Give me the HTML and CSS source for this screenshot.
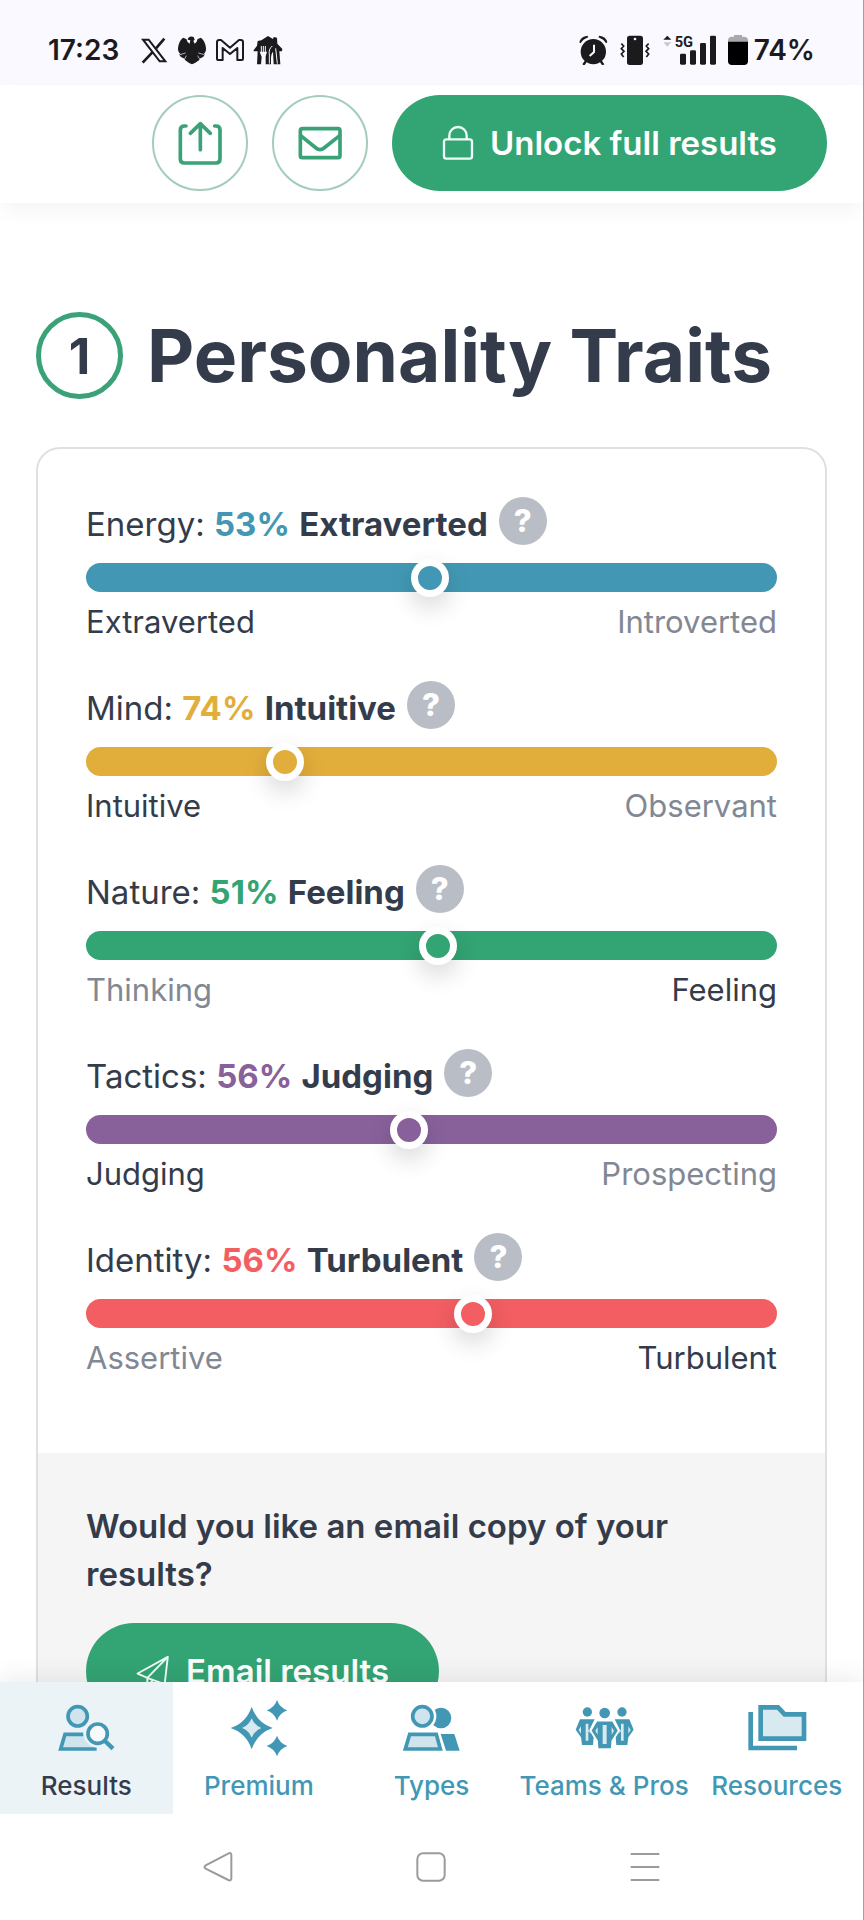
FILE: index.html
```html
<!DOCTYPE html>
<html lang="en">
<head>
    <meta charset="UTF-8">
    <meta name="viewport" content="width=device-width, initial-scale=1.0">
    <title>Personality Traits</title>
    <link rel="stylesheet" href="styles.css">
</head>
<body>
    <div class="status-bar">
        <div class="status-left">
            <span class="clock">17:23</span>
            <svg class="status-icon" viewBox="0 0 90 90" fill="none" stroke="#1b1b1e">
                <path d="M12 14H29L79 79H62Z" stroke-width="6"/>
                <path d="M76 11L51 40M40 52L11 83" stroke-width="8"/>
            </svg>
            <svg class="status-icon" viewBox="0 0 90 90" fill="#1b1b1e">
                <path d="M34 8Q42 2 50 6L53 14L49 18L53 26Q60 22 62 12L72 8Q86 20 87 40Q88 52 77 60L84 58Q80 68 70 70L66 76Q56 84 45 88Q34 84 25 76L20 70Q10 68 6 58L14 60Q2 52 3 40Q4 20 18 8L28 12Q30 22 38 26L40 16L32 14Z"/>
                <path d="M28 62L22 74M62 62L69 74M12 58L26 54M78 58L64 54" stroke="#faf9ff" stroke-width="2"/>
            </svg>
            <svg class="status-icon" viewBox="0 0 90 90" fill="none" stroke="#1b1b1e" stroke-width="6" stroke-linejoin="round">
                <path d="M6 22Q6 15 13 15H18L45 38L72 15H77Q84 15 84 22V72Q84 75 81 75H67V39L45 57L23 39V75H9Q6 75 6 72Z"/>
            </svg>
            <svg class="status-icon" viewBox="0 0 90 90" fill="#1b1b1e">
                <path d="M2 46L12 32L14 18L25 16L45 3L60 12L62 6L72 8L73 26L88 42L87 49H79L82 88H62L60 50Q54 56 54 72V88H38V64L42 50H20L26 66L24 88H12L14 49H2Z"/>
                <path d="M25 33V52Q25 58 31 59V86M31 33V52M37 33V52Q37 58 31 59" fill="none" stroke="#faf9ff" stroke-width="3"/>
                <path d="M58 33Q46 42 49 60V86M68 40L73 86" fill="none" stroke="#faf9ff" stroke-width="3"/>
            </svg>
        </div>
        <div class="status-right">
            <svg class="status-icon" viewBox="0 0 90 90" fill="#1b1b1e">
                <circle cx="46" cy="50" r="38"/>
                <path d="M4 22Q8 4 28 2L31 7Q14 13 8 25Z"/>
                <path d="M88 22Q84 4 64 2L61 7Q78 13 84 25Z"/>
                <path d="M24 78L16 90M68 78L76 90" stroke="#1b1b1e" stroke-width="7"/>
                <path d="M48 29V51L35 63" fill="none" stroke="#faf9ff" stroke-width="6"/>
            </svg>
            <svg class="status-icon" viewBox="0 0 90 90">
                <rect x="21" y="2" width="48" height="88" rx="8" fill="#1b1b1e"/>
                <circle cx="45" cy="12" r="4" fill="#faf9ff"/>
                <path d="M4 26L11 33L4 41L12 49L4 57L11 66M86 26L79 33L86 41L78 49L86 57L79 66" fill="none" stroke="#1b1b1e" stroke-width="5"/>
            </svg>
            <svg class="signal-icon" viewBox="0 -12 162 114">
                <path d="M4 14L16 2L28 14Z" fill="#1b1b1e"/>
                <path d="M4 22H28L16 35Z" fill="#c9c9cd"/>
                <text class="signal-text" x="38" y="36">5G</text>
                <g fill="#1b1b1e">
                    <rect x="54" y="56" width="18" height="33" rx="4"/>
                    <rect x="84" y="46" width="18" height="43" rx="4"/>
                    <rect x="114" y="24" width="18" height="65" rx="4"/>
                    <rect x="144" y="2" width="18" height="87" rx="4"/>
                </g>
            </svg>
            <div class="battery">
                <svg class="battery-icon" viewBox="0 0 60 90">
                    <path d="M18 0H42V5H48Q60 5 60 17V30H0V17Q0 5 12 5H18Z" fill="#aaaaae"/>
                    <path d="M0 20H60V78Q60 90 48 90H12Q0 90 0 78Z" fill="#000"/>
                </svg>
                <span class="clock">74%</span>
            </div>
        </div>
    </div>

    <header class="top-bar">
        <button class="round-btn" aria-label="Share">
            <svg class="round-icon" viewBox="0 0 144 144">
                <path d="M30 21H26Q13 21 13 33V120Q13 132 25 132H120Q132 132 132 120V33Q132 21 120 21H116"/>
                <path d="M73 92V15M43 43L73 14L103 43"/>
            </svg>
        </button>
        <button class="round-btn" aria-label="Email">
            <svg class="round-icon" viewBox="0 0 144 144">
                <rect x="13" y="29" width="119" height="87" rx="6"/>
                <path d="M14 50L60 87Q72 97 84 87L131 50"/>
            </svg>
        </button>
        <button class="pill-btn">
            <svg class="pill-icon" viewBox="0 0 96 108">
                <rect x="6" y="43" width="84" height="58" rx="7"/>
                <path d="M22 43V32a26 26 0 0 1 52 0V43"/>
            </svg>
            Unlock full results
        </button>
    </header>

    <main class="content">
        <div class="section-title">
            <span class="number">1</span>
            <h1>Personality Traits</h1>
        </div>

        <div class="card">
            <div class="traits">
                <div class="trait blue">
                    <div class="trait-head">
                        <label for="energy">Energy: <b class="percent">53%</b> <b>Extraverted</b></label>
                        <button class="help" aria-label="About Energy">?</button>
                    </div>
                    <input type="range" id="energy" min="0" max="100" step="0.1" value="49.7">
                    <div class="trait-ends"><span>Extraverted</span><span class="muted">Introverted</span></div>
                </div>
                <div class="trait yellow">
                    <div class="trait-head">
                        <label for="mind">Mind: <b class="percent">74%</b> <b>Intuitive</b></label>
                        <button class="help" aria-label="About Mind">?</button>
                    </div>
                    <input type="range" id="mind" min="0" max="100" step="0.1" value="27.5">
                    <div class="trait-ends"><span>Intuitive</span><span class="muted">Observant</span></div>
                </div>
                <div class="trait green">
                    <div class="trait-head">
                        <label for="nature">Nature: <b class="percent">51%</b> <b>Feeling</b></label>
                        <button class="help" aria-label="About Nature">?</button>
                    </div>
                    <input type="range" id="nature" min="0" max="100" step="0.1" value="51">
                    <div class="trait-ends"><span class="muted">Thinking</span><span>Feeling</span></div>
                </div>
                <div class="trait purple">
                    <div class="trait-head">
                        <label for="tactics">Tactics: <b class="percent">56%</b> <b>Judging</b></label>
                        <button class="help" aria-label="About Tactics">?</button>
                    </div>
                    <input type="range" id="tactics" min="0" max="100" step="0.1" value="46.5">
                    <div class="trait-ends"><span>Judging</span><span class="muted">Prospecting</span></div>
                </div>
                <div class="trait red">
                    <div class="trait-head">
                        <label for="identity">Identity: <b class="percent">56%</b> <b>Turbulent</b></label>
                        <button class="help" aria-label="About Identity">?</button>
                    </div>
                    <input type="range" id="identity" min="0" max="100" step="0.1" value="56.3">
                    <div class="trait-ends"><span class="muted">Assertive</span><span>Turbulent</span></div>
                </div>
            </div>
            <div class="email-box">
                <p>Would you like an email copy of your results?</p>
                <button class="pill-btn">
                    <svg class="plane-icon" viewBox="0 0 108 108">
                        <path d="M5 62L101 9L91 96L42 78ZM101 9L36 76V102L54 83"/>
                    </svg>
                    Email results
                </button>
            </div>
        </div>
    </main>

    <nav class="tab-bar">
        <a href="#" class="tab active">
            <svg class="tab-icon" viewBox="0 0 180 180">
                <circle class="tint" cx="65" cy="55" r="29"/>
                <path class="tint" d="M82 109H27L14 153H122"/>
                <circle cx="125" cy="107" r="42" fill="#ebf3f7"/>
                <circle cx="125" cy="107" r="29" fill="#f7fafc" stroke="#4298b4" stroke-width="11"/>
                <path d="M147 129L171 152" stroke="#4298b4" stroke-width="13"/>
            </svg>
            Results
        </a>
        <a href="#" class="tab">
            <svg class="tab-icon" viewBox="0 0 180 180" fill="#4298b4">
                <path d="M68 26Q84 74 131 90Q84 106 68 154Q52 106 5 90Q52 74 68 26Z"/>
                <path d="M68 61Q76 82 97 90Q76 98 68 119Q60 98 39 90Q60 82 68 61Z" fill="#d9e9f0"/>
                <path d="M144 6Q152 29 175 37Q152 45 144 68Q136 45 113 37Q136 29 144 6Z"/>
                <path d="M144 113Q152 136 175 144Q152 152 144 175Q136 152 113 144Q136 136 144 113Z"/>
            </svg>
            Premium
        </a>
        <a href="#" class="tab">
            <svg class="tab-icon" viewBox="0 0 180 180">
                <circle cx="120" cy="60" r="31" fill="#4298b4"/>
                <circle cx="64" cy="55" r="42" fill="#fff"/>
                <circle class="tint" cx="64" cy="55" r="29"/>
                <path class="tint" d="M26 109H106L118 153H13Z"/>
                <path d="M119 108H160L176 158H135Z" fill="#4298b4"/>
            </svg>
            Types
        </a>
        <a href="#" class="tab">
            <svg class="tab-icon" viewBox="0 0 180 180">
                <g id="side-person">
                    <circle cx="40" cy="42" r="14" fill="#4298b4"/>
                    <path d="M18 64H62L46 96L59 118L57 141H24L21 118L5 95Z" fill="#4298b4"/>
                    <path d="M35 77H43V94L52 108L43 100V128H35ZM21 85V107L14 96Z" fill="#d9e9f0"/>
                </g>
                <use href="#side-person" transform="translate(184 0) scale(-1 1)"/>
                <circle cx="92" cy="45" r="16" fill="#4298b4"/>
                <path d="M68 68H116L134 98L115 128L113 153H71L69 128L50 98Z" fill="#4298b4" stroke="#fff" stroke-width="5"/>
                <path d="M86 81H98V138H86ZM71 87V110L64 98ZM113 87V110L120 98Z" fill="#d9e9f0"/>
            </svg>
            Teams &amp; Pros
        </a>
        <a href="#" class="tab">
            <svg class="tab-icon" viewBox="0 0 180 180">
                <path d="M11 42V150H150" fill="none" stroke="#4298b4" stroke-width="14"/>
                <path d="M41 28H93L113 49H171V122H41Z" fill="#d9e9f0" stroke="#4298b4" stroke-width="14"/>
            </svg>
            Resources
        </a>
    </nav>

    <div class="system-nav">
        <button aria-label="Back">
            <svg class="system-icon" viewBox="0 0 90 90"><path d="M77 4Q85 1 85 10V79Q85 88 76 84L8 50Q1 45 8 40Z"/></svg>
        </button>
        <button aria-label="Home">
            <svg class="system-icon" viewBox="0 0 90 90"><rect x="4" y="4" width="82" height="82" rx="17"/></svg>
        </button>
        <button aria-label="Menu">
            <svg class="system-icon" viewBox="0 0 90 90"><path d="M2 6H88M2 45H88M2 84H88"/></svg>
        </button>
    </div>
</body>
</html>
```
FILE: styles.css
```css
* {
    box-sizing: border-box;
}
body {
    display: flex;
    flex-direction: column;
    height: 100vh;
    margin: 0;
    overflow: hidden;
    border-right: 1px solid #a0a0a4;
    background: #fff;
    color: #343c4b;
    font-family: Inter, "Liberation Sans", sans-serif;
    font-size: 33px;
}
button {
    padding: 0;
    border: 0;
    background: none;
    color: inherit;
    font: inherit;
    cursor: pointer;
}
svg {
    display: block;
    flex: none;
}

/* Phone status bar */
.status-bar {
    display: flex;
    flex: none;
    justify-content: space-between;
    align-items: center;
    height: 85px;
    padding: 14px 48px 0 48px;
    background: #faf9ff;
    color: #1b1b1e;
}
.status-left {
    display: flex;
    align-items: center;
    gap: 8px;
}
.status-left .clock {
    margin-right: 12px;
}
.status-right {
    display: flex;
    align-items: center;
    gap: 12px;
}
.clock {
    font-size: 28px;
    font-weight: 600;
    line-height: 30px;
}
.status-icon {
    width: 30px;
    height: 30px;
}
.signal-icon {
    width: 54px;
    height: 38px;
}
.signal-text {
    font-family: Roboto, sans-serif;
    font-size: 44px;
    font-weight: 700;
    fill: #1b1b1e;
}
.battery {
    display: flex;
    align-items: center;
    gap: 6px;
}
.battery-icon {
    width: 20px;
    height: 30px;
}

/* Top actions */
.top-bar {
    display: flex;
    flex: none;
    justify-content: flex-end;
    gap: 24px;
    padding: 10px 36px 12px;
    background: #fff;
    box-shadow: 0 8px 24px -4px rgba(0, 0, 0, 0.06);
    z-index: 1;
}
.round-btn {
    display: flex;
    align-items: center;
    justify-content: center;
    width: 96px;
    height: 96px;
    border: 2px solid #a3cdb9;
    border-radius: 50%;
}
.round-icon {
    width: 48px;
    height: 48px;
    fill: none;
    stroke: #3ba277;
    stroke-width: 11;
    stroke-linecap: round;
    stroke-linejoin: round;
}
.pill-btn {
    display: inline-flex;
    align-items: center;
    gap: 16px;
    height: 96px;
    padding: 0 50px;
    border-radius: 48px;
    background: #33a474;
    color: #fff;
    font-weight: 600;
    white-space: nowrap;
}
.pill-icon,
.plane-icon {
    width: 32px;
    height: 36px;
    fill: none;
    stroke: #f0fff8;
    stroke-width: 7;
    stroke-linejoin: round;
}
.plane-icon {
    width: 34px;
    stroke-width: 6;
}

/* Results */
.content {
    flex: 1;
    min-height: 0;
    padding: 109px 36px 48px;
    overflow-y: auto;
    scrollbar-width: none;
}
.section-title {
    display: flex;
    align-items: center;
    gap: 24px;
    margin-bottom: 48px;
}
.number {
    display: flex;
    flex: none;
    align-items: center;
    justify-content: center;
    width: 87px;
    height: 87px;
    border: 5px solid #3ba277;
    border-radius: 50%;
    font-size: 50px;
    font-weight: 700;
}
h1 {
    margin: 0;
    font-size: 73px;
    font-weight: 700;
    line-height: 86px;
    white-space: nowrap;
}
.card {
    border: 2px solid #dfe0e3;
    border-radius: 24px;
    overflow: hidden;
}
.traits {
    display: flex;
    flex-direction: column;
    gap: 35px;
    padding: 48px 48px 71px;
}
.trait-head {
    display: flex;
    align-items: flex-start;
    gap: 11px;
    height: 54px;
    line-height: 54px;
}
.trait b {
    font-weight: 700;
}
.trait .percent {
    color: var(--color);
}
.help {
    width: 48px;
    height: 48px;
    border-radius: 50%;
    background: #b9bec6;
    color: #fff;
    font-size: 31px;
    font-weight: 800;
    line-height: 48px;
}
.trait-ends {
    display: flex;
    justify-content: space-between;
    margin-top: 6px;
    font-size: 31px;
    line-height: 48px;
}
.muted {
    color: #828893;
}
.blue { --color: #4298b4; }
.yellow { --color: #e2ae3b; }
.green { --color: #33a474; }
.purple { --color: #88619a; }
.red { --color: #f25e62; }

input[type="range"] {
    display: block;
    width: 100%;
    height: 29px;
    margin: 12px 0 0;
    border-radius: 15px;
    background: var(--color);
    appearance: none;
}
input[type="range"]::-webkit-slider-thumb {
    width: 38px;
    height: 38px;
    border: 7px solid #fff;
    border-radius: 50%;
    background: var(--color);
    box-shadow: 0 10px 24px rgba(0, 0, 0, 0.16);
    appearance: none;
}

.email-box {
    padding: 49px 48px 48px;
    background: #f5f5f5;
}
.email-box p {
    margin: 0 0 25px;
    font-weight: 600;
    line-height: 48px;
}

/* Bottom tabs */
.tab-bar {
    display: grid;
    flex: none;
    grid-template-columns: repeat(5, 1fr);
    background: #fff;
    box-shadow: 0 -4px 24px rgba(0, 0, 0, 0.08);
    z-index: 1;
}
.tab {
    display: flex;
    flex-direction: column;
    align-items: center;
    gap: 10px;
    padding: 16px 0 10px;
    color: #4298b4;
    font-size: 26px;
    font-weight: 500;
    line-height: 36px;
    text-decoration: none;
    white-space: nowrap;
}
.tab.active {
    background: #ebf3f7;
    color: #343c4b;
}
.tab-icon {
    width: 60px;
    height: 60px;
}
.tint {
    fill: #d0e4ed;
    stroke: #4298b4;
    stroke-width: 11;
}

/* Phone navigation */
.system-nav {
    display: grid;
    flex: none;
    grid-template-columns: repeat(3, 1fr);
    justify-items: center;
    align-items: center;
    height: 106px;
    padding: 0 111px;
    background: #fff;
    z-index: 1;
}
.system-icon {
    width: 30px;
    height: 30px;
    fill: none;
    stroke: #9b9b9b;
    stroke-width: 6;
}
```
